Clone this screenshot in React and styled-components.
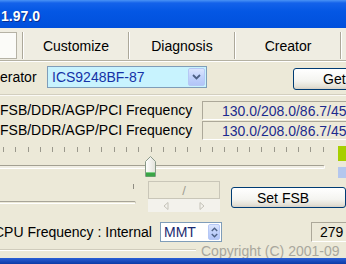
import React from "react";
import styled, { createGlobalStyle } from "styled-components";

const Global = createGlobalStyle`
  * { box-sizing: border-box; }
  html, body { margin: 0; padding: 0; background: #ECE9D8; }
`;

const Root = styled.div`
  width: 346px;
  height: 264px;
  overflow: hidden;
  background: #ECE9D8;
  display: flex;
  flex-direction: column;
  font-family: "Liberation Sans", Arial, sans-serif;
  font-size: 14px;
  color: #000;
`;

const TitleBar = styled.div`
  height: 28px;
  flex-shrink: 0;
  display: flex;
  align-items: center;
  padding: 3px 0 0 1px;
  background: linear-gradient(180deg, #4a93f5 0px, #1462ea 3px, #0457e4 40%, #0050dc 100%);
  color: #fff;
  font-weight: bold;
  font-size: 14px;
  text-shadow: 1px 1px 0 #0b2f92;
`;

const TabBar = styled.div`
  height: 33px;
  flex-shrink: 0;
  display: flex;
  padding: 4px 0 1px 0;
  border-bottom: 1px solid #b4b1a2;
  box-shadow: 0 1px 0 #fff;
  background: #efede2;
`;

const SelectedTab = styled.div`
  width: 17px;
  margin-right: 5px;
  background: #fbfbf8;
  border: 1px solid #b5b2a5;
  border-left: none;
`;

const TabSep = styled.div`
  width: 2px;
  border-left: 1px solid #aca899;
  border-right: 1px solid #fff;
`;

const TabItem = styled.div`
  width: 104px;
  flex-shrink: 0;
  display: flex;
  align-items: center;
  justify-content: center;
`;

const Row = styled.div`
  display: flex;
  flex-shrink: 0;
  align-items: ${(p) => p.$align || "flex-start"};
  height: ${(p) => p.$h}px;
  margin-top: ${(p) => p.$mt || 0}px;
`;

const Label = styled.div`
  width: ${(p) => p.$w}px;
  flex-shrink: 0;
  line-height: ${(p) => p.$lh}px;
  white-space: nowrap;
  text-indent: ${(p) => p.$indent || 0}px;
`;

const Combo = styled.div`
  width: ${(p) => p.$w}px;
  height: ${(p) => p.$h}px;
  flex-shrink: 0;
  display: flex;
  align-items: stretch;
  border: 1px solid #7f9db9;
  background: ${(p) => p.$bg};
  color: ${(p) => p.$color};
`;

const ComboText = styled.div`
  flex: 1;
  padding-left: ${(p) => p.$pl}px;
  display: flex;
  align-items: center;
  white-space: nowrap;
`;

const DropBtn = styled.div`
  width: ${(p) => p.$w}px;
  margin: 1px;
  border: 1px solid #b6c8f5;
  border-radius: 2px;
  background: linear-gradient(180deg, #dbe5fd 0%, #c1d2fb 50%, #b2c5f7 100%);
  display: flex;
  flex-direction: column;
  align-items: center;
  justify-content: center;
  gap: 1px;
`;

const XPButton = styled.div`
  width: ${(p) => p.$w}px;
  height: ${(p) => p.$h}px;
  flex-shrink: 0;
  margin-left: ${(p) => p.$ml}px;
  margin-top: ${(p) => p.$mt}px;
  padding-left: ${(p) => p.$pl}px;
  display: flex;
  align-items: center;
  border: 1px solid #003c74;
  border-radius: 3px;
  background: linear-gradient(180deg, #ffffff 0%, #f4f4f0 60%, #e4e1d6 88%, #d6d0c5 100%);
  white-space: nowrap;
`;

const EtchedLine = styled.div`
  flex-shrink: 0;
  height: 2px;
  margin-top: ${(p) => p.$mt}px;
  margin-left: ${(p) => p.$ml || 0}px;
  border-top: 1px solid #d3cfbf;
  border-bottom: 1px solid #fbfaf6;
`;

const ValueBox = styled.div`
  width: ${(p) => p.$w}px;
  height: ${(p) => p.$h}px;
  flex-shrink: 0;
  margin-left: ${(p) => p.$ml || 0}px;
  padding-left: ${(p) => p.$pl}px;
  display: flex;
  align-items: center;
  border-top: 1px solid #aca899;
  border-left: 1px solid #aca899;
  border-bottom: 1px solid #fff;
  border-right: 1px solid #fff;
  color: ${(p) => p.$color || "#000"};
  white-space: nowrap;
`;

const FreqRow = styled.div`
  display: flex;
  height: 19px;
  margin-bottom: 1px;
  flex-shrink: 0;
`;

const SliderArea = styled.div`
  display: flex;
  height: 34px;
  margin-top: 4px;
  flex-shrink: 0;
`;

const SliderBox = styled.div`
  position: relative;
  width: 327px;
  display: flex;
  flex-direction: column;
`;

const Ticks = styled.div`
  display: flex;
  justify-content: space-between;
  padding: 0 1px 0 3px;
  margin-top: 2px;
`;

const Tick = styled.div`
  width: 1px;
  height: 5px;
  background: #9a988c;
`;

const Channel = styled.div`
  margin-top: 13px;
  height: 4px;
  border-top: 1px solid #a3a092;
  border-bottom: 1px solid #fff;
  border-right: 1px solid #fff;
  border-radius: 0 2px 2px 0;
  background: #f0eee4;
`;

const Thumb = styled.svg`
  position: absolute;
  left: 145px;
  top: 11px;
`;

const Indicators = styled.div`
  margin-left: 13px;
  display: flex;
  flex-direction: column;
`;

const Swatch = styled.div`
  width: 8px;
  height: ${(p) => p.$h}px;
  margin-top: ${(p) => p.$mt}px;
  background: ${(p) => p.$bg};
`;

const Lower = styled.div`
  display: flex;
  height: 34px;
  flex-shrink: 0;
`;

const LeftTrackArea = styled.div`
  width: 137px;
  display: flex;
  flex-direction: column;
`;

const SmallTick = styled.div`
  width: 1px;
  height: 5px;
  margin: 5px 0 0 133px;
  background: #8e8c82;
`;

const LeftTrack = styled.div`
  margin-top: 12px;
  height: 3px;
  border-top: 1px solid #a8a598;
  border-bottom: 1px solid #fff;
  border-right: 1px solid #c9c6b8;
  border-radius: 0 2px 2px 0;
`;

const FieldCol = styled.div`
  width: 72px;
  margin-left: 12px;
  margin-top: 2px;
  display: flex;
  flex-direction: column;
`;

const Field = styled.div`
  height: 18px;
  border: 1px solid #c9c6b8;
  display: flex;
  align-items: center;
  justify-content: center;
  color: #a09d92;
  font-size: 13px;
`;

const ArrowStrip = styled.div`
  height: 13px;
  background: #f3f2ec;
  display: flex;
  align-items: center;
  justify-content: space-around;
`;

const GroupRow = styled.div`
  display: flex;
  align-items: center;
  height: 14px;
  margin-top: 2px;
  flex-shrink: 0;
`;

const GroupLine = styled.div`
  width: 196px;
  height: 2px;
  margin-top: -3px;
  border-top: 1px solid #d0ccbc;
  border-bottom: 1px solid #fff;
`;

const Copyright = styled.div`
  margin-left: 5px;
  color: #a9a79d;
  white-space: nowrap;
  line-height: 14px;
`;

const BottomBar = styled.div`
  margin-top: auto;
  height: 6px;
  flex-shrink: 0;
  background: linear-gradient(180deg, #2a5fd6 0%, #0a3aa6 100%);
`;

const Chevron = ({ dir = "down", w = 9, h = 6, color = "#4d6185" }) => (
  <svg width={w} height={h} viewBox="0 0 9 6">
    <path
      d={dir === "down" ? "M1 1 L4.5 4.5 L8 1" : "M1 5 L4.5 1.5 L8 5"}
      fill="none"
      stroke={color}
      strokeWidth="1.8"
    />
  </svg>
);

const Tri = ({ left }) => (
  <svg width="6" height="8" viewBox="0 0 6 8">
    <path
      d={left ? "M5 0.5 L1 4 L5 7.5 Z" : "M1 0.5 L5 4 L1 7.5 Z"}
      fill="none"
      stroke="#c4c2b8"
      strokeWidth="1"
    />
  </svg>
);

export default function App() {
  const ticks = Array.from({ length: 27 });
  return (
    <Root>
      <Global />
      <TitleBar>1.97.0</TitleBar>
      <TabBar>
        <SelectedTab />
        <TabSep />
        <TabItem>Customize</TabItem>
        <TabSep />
        <TabItem>Diagnosis</TabItem>
        <TabSep />
        <TabItem>Creator</TabItem>
        <TabSep />
      </TabBar>

      <Row $h={24} $mt={5}>
        <Label $w={47} $lh={22}>erator</Label>
        <Combo $w={160} $h={22} $bg="#c8f3fe" $color="#1532a6">
          <ComboText $pl={4}>ICS9248BF-87</ComboText>
          <DropBtn $w={17}>
            <Chevron dir="down" />
          </DropBtn>
        </Combo>
        <XPButton $w={70} $h={22} $ml={86} $mt={2} $pl={29}>Get</XPButton>
      </Row>

      <EtchedLine $mt={4} $ml={0} />

      <div style={{ marginTop: 5 }}>
        <FreqRow>
          <Label $w={202} $lh={19}>FSB/DDR/AGP/PCI Frequency</Label>
          <ValueBox $w={160} $h={19} $pl={19} $color="#1d2b8e">130.0/208.0/86.7/45.6</ValueBox>
        </FreqRow>
        <FreqRow>
          <Label $w={202} $lh={19}>FSB/DDR/AGP/PCI Frequency</Label>
          <ValueBox $w={160} $h={19} $pl={19} $color="#1d2b8e">130.0/208.0/86.7/45.6</ValueBox>
        </FreqRow>
      </div>

      <SliderArea>
        <SliderBox>
          <Ticks>
            {ticks.map((_, i) => (
              <Tick key={i} />
            ))}
          </Ticks>
          <Channel />
          <Thumb width="11" height="21" viewBox="0 0 11 21">
            <defs>
              <linearGradient id="tg" x1="0" y1="0" x2="1" y2="0">
                <stop offset="0" stopColor="#ffffff" />
                <stop offset="1" stopColor="#e2e2da" />
              </linearGradient>
            </defs>
            <path d="M5.5 0.5 L10.5 5.5 L10.5 20.5 L0.5 20.5 L0.5 5.5 Z" fill="url(#tg)" stroke="#8a9a8a" />
            <rect x="1" y="17" width="9" height="3.5" fill="#3aa546" />
            <rect x="1" y="16" width="9" height="1" fill="#7fcf86" />
          </Thumb>
        </SliderBox>
        <Indicators>
          <Swatch $h={15} $mt={1} $bg="#a7cf00" />
          <Swatch $h={11} $mt={6} $bg="#b4c7ee" />
        </Indicators>
      </SliderArea>

      <Lower>
        <LeftTrackArea>
          <SmallTick />
          <LeftTrack />
        </LeftTrackArea>
        <FieldCol>
          <Field>/</Field>
          <ArrowStrip>
            <Tri left />
            <Tri />
          </ArrowStrip>
        </FieldCol>
        <XPButton $w={115} $h={21} $ml={11} $mt={8} $pl={25}>Set FSB</XPButton>
      </Lower>

      <Row $h={20} $mt={9} $align="stretch">
        <Label $w={160} $lh={20} $indent={-6}>CPU Frequency : Internal</Label>
        <Combo $w={62} $h={20} $bg="#ffffff" $color="#1a2a70">
          <ComboText $pl={3}>MMT</ComboText>
          <DropBtn $w={12}>
            <Chevron dir="up" w={7} h={5} />
            <Chevron dir="down" w={7} h={5} />
          </DropBtn>
        </Combo>
        <ValueBox $w={60} $h={20} $ml={89} $pl={8}>279</ValueBox>
      </Row>

      <GroupRow>
        <GroupLine />
        <Copyright>Copyright (C) 2001-09</Copyright>
      </GroupRow>

      <BottomBar />
    </Root>
  );
}
